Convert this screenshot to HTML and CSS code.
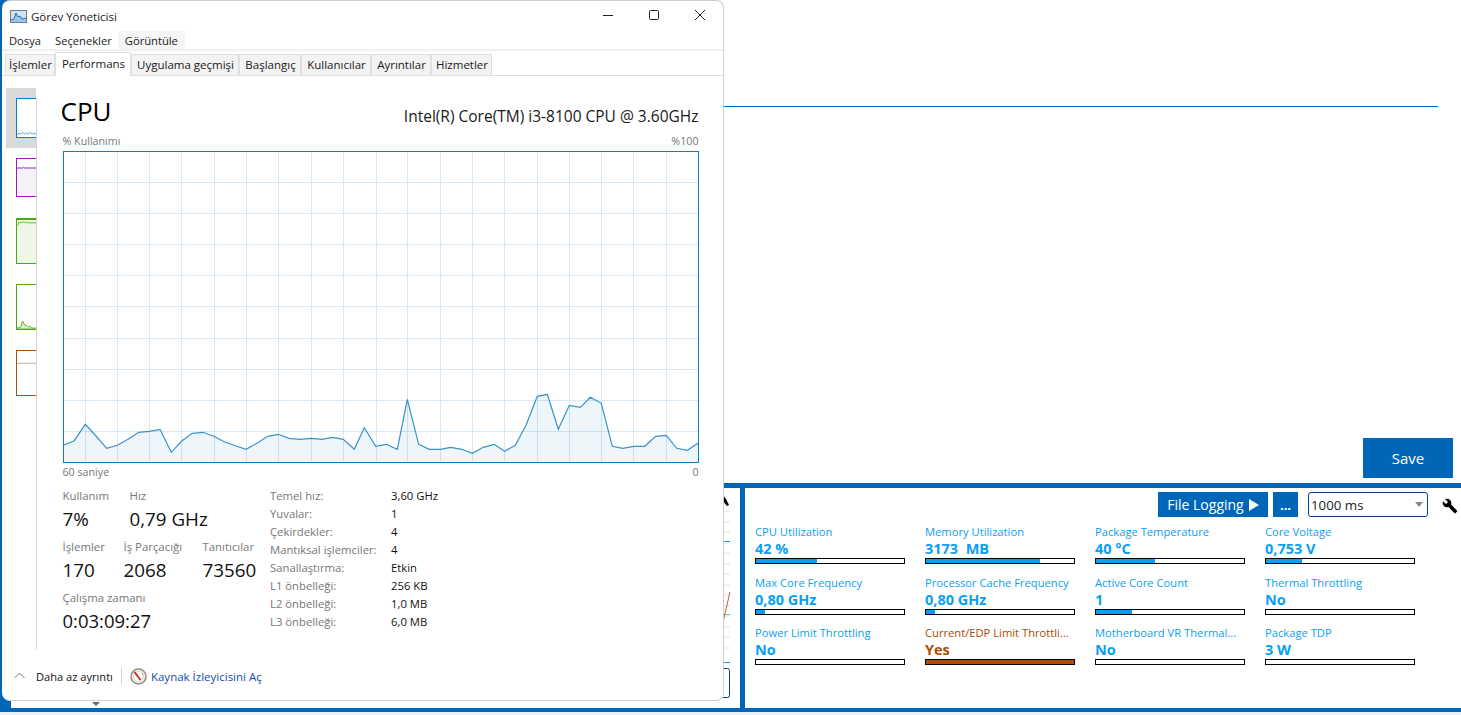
FILE: index.html
```html
<!DOCTYPE html>
<html lang="tr">
<head>
<meta charset="utf-8">
<title>Görev Yöneticisi</title>
<link rel="stylesheet" href="styles.css">
</head>
<body>
<div class="app">
  <div class="main">
    <div class="top">
      <div class="rule"></div>
      <button class="save">Save</button>
    </div>
    <div class="hbar"></div>
    <div class="bottom">
      <div class="left-panel">
        <svg class="sliver" width="17" height="220" viewBox="723 488 17 220">
          <g stroke="#e2e2e2" fill="none">
            <path d="M723 511h7M723 522h7M723 532h7M723 543h7M723 553h7M723 564h7M723 574h7M723 585h7M723 595h7M723 606h7M723 616h7M723 627h7M723 637h7M723 648h7"/>
          </g>
          <path d="M723 541.5h7M723 662.5h7" stroke="#1a9bf0" fill="none"/>
          <path d="M723 614.5h7" stroke="#3fd6b0" fill="none"/>
          <path d="M723 622l7-30" stroke="#c2622a" fill="none"/>
          <path d="M723 668.5h4.500a2 2 0 0 1 2 2v25a2 2 0 0 1-2 2h-4.500" stroke="#0c3f7a" fill="none"/>
          <path d="M723 495l3 4 3 6-2 1-4-5z" fill="#000"/>
        </svg>
        <span class="caret"></span>
      </div>
      <div class="divider"></div>
      <div class="right-panel">
        <div class="toolbar">
          <button class="tbtn log">File Logging <span class="play"></span></button>
          <button class="tbtn more">...</button>
          <div class="select">1000 ms<span class="sel-arrow"></span></div>
          <svg class="wrench" width="16" height="16" viewBox="0 0 24 24"><path d="M22.700 19l-9.100-9.100c.9-2.300.4-5-1.500-6.900-2-2-5-2.400-7.400-1.300L9 6 6 9 1.600 4.700C.4 7.100.9 10.100 2.900 12.100c1.900 1.900 4.600 2.400 6.900 1.500l9.100 9.100c.4.4 1 .4 1.400 0l2.300-2.300c.5-.4.500-1.100.1-1.400z"/></svg>
        </div>
        <div class="metrics">
          <div class="metric"><div class="m-label">CPU Utilization</div><div class="m-value">42 %</div><div class="m-bar"><div class="m-fill" style="width:41%"></div></div></div>
          <div class="metric"><div class="m-label">Memory Utilization</div><div class="m-value">3173&nbsp; MB</div><div class="m-bar"><div class="m-fill" style="width:77%"></div></div></div>
          <div class="metric"><div class="m-label">Package Temperature</div><div class="m-value">40 °C</div><div class="m-bar"><div class="m-fill" style="width:40%"></div></div></div>
          <div class="metric"><div class="m-label">Core Voltage</div><div class="m-value">0,753 V</div><div class="m-bar"><div class="m-fill" style="width:24%"></div></div></div>
          <div class="metric"><div class="m-label">Max Core Frequency</div><div class="m-value">0,80 GHz</div><div class="m-bar"><div class="m-fill" style="width:6%"></div></div></div>
          <div class="metric"><div class="m-label">Processor Cache Frequency</div><div class="m-value">0,80 GHz</div><div class="m-bar"><div class="m-fill" style="width:6%"></div></div></div>
          <div class="metric"><div class="m-label">Active Core Count</div><div class="m-value">1</div><div class="m-bar"><div class="m-fill" style="width:24%"></div></div></div>
          <div class="metric"><div class="m-label">Thermal Throttling</div><div class="m-value">No</div><div class="m-bar"></div></div>
          <div class="metric"><div class="m-label">Power Limit Throttling</div><div class="m-value">No</div><div class="m-bar"></div></div>
          <div class="metric alert"><div class="m-label">Current/EDP Limit Throttli...</div><div class="m-value">Yes</div><div class="m-bar"><div class="m-fill" style="width:100%"></div></div></div>
          <div class="metric"><div class="m-label">Motherboard VR Thermal...</div><div class="m-value">No</div><div class="m-bar"></div></div>
          <div class="metric"><div class="m-label">Package TDP</div><div class="m-value">3 W</div><div class="m-bar"></div></div>
        </div>
      </div>
    </div>
  </div>
  <div class="hbar thin"></div>
  <div class="foot"></div>

  <section class="taskmgr">
    <header class="titlebar">
      <svg class="tm-icon" width="17" height="13" viewBox="0 0 17 13">
        <rect x=".5" y=".5" width="16" height="12" fill="#cfe3f5" stroke="#6d7f95"/>
        <path d="M1 10l3-1 2-6 2 4 2-1 2 3 4-1v4H1z" fill="#9cc6ea"/>
        <path d="M1 10l3-1 2-6 2 4 2-1 2 3 4-1" fill="none" stroke="#2c6fb5"/>
      </svg>
      <span class="title">Görev Yöneticisi</span>
      <div class="winctl">
        <svg width="12" height="12" viewBox="0 0 12 12"><path d="M1 6.500h10" stroke="#222" fill="none"/></svg>
        <svg width="12" height="12" viewBox="0 0 12 12"><rect x="1.500" y="1.500" width="9" height="9" rx="1" stroke="#222" fill="none"/></svg>
        <svg width="12" height="12" viewBox="0 0 12 12"><path d="M1 1l10 10M11 1L1 11" stroke="#222" fill="none"/></svg>
      </div>
    </header>
    <nav class="menu">
      <span class="mi">Dosya</span>
      <span class="mi">Seçenekler</span>
      <span class="mi on">Görüntüle</span>
    </nav>
    <div class="tabs">
      <span class="tab t1">İşlemler</span>
      <span class="tab active">Performans</span>
      <span class="tab t3">Uygulama geçmişi</span>
      <span class="tab t4">Başlangıç</span>
      <span class="tab t5">Kullanıcılar</span>
      <span class="tab t6">Ayrıntılar</span>
      <span class="tab t7">Hizmetler</span>
    </div>
    <div class="body">
      <aside class="side">
        <div class="item sel"><div class="thumb blue">
          <svg viewBox="0 0 20 40" preserveAspectRatio="none"><path d="M0 38l2-2 2 1 2-2 2 2 2-1 2 1 2-2 2 2 2-1 2 1" fill="none" stroke="#4fa0d2"/></svg>
        </div></div>
        <div class="item i2"><div class="thumb purple">
          <svg viewBox="0 0 20 39" preserveAspectRatio="none"><rect y="9" width="20" height="30" fill="#f4f2f6"/><path d="M0 9.500h6l1-1 1 1h12" fill="none" stroke="#9a1fb0"/></svg>
        </div></div>
        <div class="item i3"><div class="thumb green fill-top">
          <svg viewBox="0 0 20 45" preserveAspectRatio="none"><rect width="20" height="45" fill="#eef6e8"/><path d="M1 6l1-4 2 1 3-1 2 1 1-1 1 1h9" fill="none" stroke="#6ab52c"/></svg>
        </div></div>
        <div class="item i4"><div class="thumb green">
          <svg viewBox="0 0 20 45" preserveAspectRatio="none"><path d="M0 44l4-1 2-6 2 4 2 0 2 2 2-1 2 2h4v1H0z" fill="#dcefcb" stroke="#6ab52c"/></svg>
        </div></div>
        <div class="item i5"><div class="thumb orange">
          <svg viewBox="0 0 20 45" preserveAspectRatio="none"><path d="M0 12.500h20" fill="none" stroke="#c9a98f"/></svg>
        </div></div>
      </aside>
      <div class="content">
        <div class="head">
          <h1 class="cpu">CPU</h1>
          <div class="model">Intel(R) Core(TM) i3-8100 CPU @ 3.60GHz</div>
        </div>
        <div class="axis top-axis"><span>% Kullanımı</span><span>%100</span></div>
        <svg class="chart" width="636" height="312" viewBox="63 151 636 312">
          <path class="grid" d="M85.500 151V462M117.500 151V462M149.500 151V462M181.500 151V462M214.500 151V462M246.500 151V462M278.500 151V462M311.500 151V462M343.500 151V462M376.500 151V462M407.500 151V462M440.500 151V462M472.500 151V462M504.500 151V462M537.500 151V462M569.500 151V462M601.500 151V462M633.500 151V462M666.500 151V462M64 182.500H698M64 213.500H698M64 244.500H698M64 275.500H698M64 306.500H698M64 338.500H698M64 369.500H698M64 400.500H698M64 431.500H698"/>
          <polygon class="area" points="63.300,445.300 74.300,440.700 85.300,424.300 96,436 106.700,448.300 117.300,445.300 128,439.300 138.700,432.300 149.300,431.300 160,429.300 171.300,452.300 181.700,441 192.300,433.300 203,432.300 213.700,436.300 224.300,441.700 235.300,445.700 246,449.300 257,443.300 267.700,436.300 278.300,434.300 289,438.300 299.700,439.300 311.300,438.300 322,439.300 332.700,437.300 343.300,439.300 354.300,449.300 364.300,427.700 375.700,446.300 386.300,444.300 397.300,449.300 407.300,399.300 418.700,444.300 429.300,449.300 440.300,449.300 450.700,447.300 461.700,449.300 472.300,453.300 483.300,447.300 494,444.300 504.700,451.300 515.300,445.300 526,425.300 537.300,396.300 547.300,394.300 558.300,429.300 569.300,405.300 580.300,407.300 590.300,397.300 601.300,403.300 612.300,446.300 622.700,448.300 633.700,446.300 644.700,446.300 655.700,436.300 666.300,435.300 676.700,448.300 687.300,450.300 698.300,443 698.300,462 63.300,462"/>
          <polyline class="line" points="63.300,445.300 74.300,440.700 85.300,424.300 96,436 106.700,448.300 117.300,445.300 128,439.300 138.700,432.300 149.300,431.300 160,429.300 171.300,452.300 181.700,441 192.300,433.300 203,432.300 213.700,436.300 224.300,441.700 235.300,445.700 246,449.300 257,443.300 267.700,436.300 278.300,434.300 289,438.300 299.700,439.300 311.300,438.300 322,439.300 332.700,437.300 343.300,439.300 354.300,449.300 364.300,427.700 375.700,446.300 386.300,444.300 397.300,449.300 407.300,399.300 418.700,444.300 429.300,449.300 440.300,449.300 450.700,447.300 461.700,449.300 472.300,453.300 483.300,447.300 494,444.300 504.700,451.300 515.300,445.300 526,425.300 537.300,396.300 547.300,394.300 558.300,429.300 569.300,405.300 580.300,407.300 590.300,397.300 601.300,403.300 612.300,446.300 622.700,448.300 633.700,446.300 644.700,446.300 655.700,436.300 666.300,435.300 676.700,448.300 687.300,450.300 698.300,443"/>
          <rect class="frame" x="63.500" y="151.500" width="635" height="311"/>
        </svg>
        <div class="axis bottom-axis"><span>60 saniye</span><span>0</span></div>
        <div class="stats">
          <div class="live">
            <div class="row r1">
              <div class="stat s-a"><div class="s-label">Kullanım</div><div class="s-val">7%</div></div>
              <div class="stat s-b"><div class="s-label">Hız</div><div class="s-val">0,79 GHz</div></div>
            </div>
            <div class="row r2">
              <div class="stat s-c"><div class="s-label">İşlemler</div><div class="s-val">170</div></div>
              <div class="stat s-d"><div class="s-label">İş Parçacığı</div><div class="s-val">2068</div></div>
              <div class="stat"><div class="s-label">Tanıtıcılar</div><div class="s-val">73560</div></div>
            </div>
            <div class="row r3">
              <div class="stat"><div class="s-label">Çalışma zamanı</div><div class="s-val">0:03:09:27</div></div>
            </div>
          </div>
          <dl class="spec">
            <dt>Temel hız:</dt><dd>3,60 GHz</dd>
            <dt>Yuvalar:</dt><dd>1</dd>
            <dt>Çekirdekler:</dt><dd>4</dd>
            <dt>Mantıksal işlemciler:</dt><dd>4</dd>
            <dt>Sanallaştırma:</dt><dd>Etkin</dd>
            <dt>L1 önbelleği:</dt><dd>256 KB</dd>
            <dt>L2 önbelleği:</dt><dd>1,0 MB</dd>
            <dt>L3 önbelleği:</dt><dd>6,0 MB</dd>
          </dl>
        </div>
      </div>
    </div>
    <footer class="tm-foot">
      <svg class="chev" width="11" height="7" viewBox="0 0 11 7"><path d="M.5 6L5.500 1l5 5" fill="none" stroke="#777"/></svg>
      <span class="less">Daha az ayrıntı</span>
      <span class="vsep"></span>
      <svg class="resmon" width="17" height="17" viewBox="0 0 17 17">
        <circle cx="8.500" cy="8.500" r="7.500" fill="#f5f1ea" stroke="#8c8c86" stroke-width="1.500"/>
        <circle cx="8.500" cy="8.500" r="5" fill="#fff" stroke="#d9d4c8"/>
        <path d="M4.500 4l6 8" stroke="#c8281e" stroke-width="1.800" fill="none"/>
        <path d="M12 5l1 2" stroke="#e08a2a" fill="none"/>
      </svg>
      <a class="link" href="#">Kaynak İzleyicisini Aç</a>
    </footer>
  </section>
</div>
</body>
</html>
```
FILE: styles.css
```css
* { box-sizing: border-box; }
html, body { margin: 0; padding: 0; }
body { font-family: "Open Sans", "Noto Sans", "Liberation Sans", sans-serif; background: #fff; color: #000; }
button { font-family: inherit; border: 0; padding: 0; }

.app { position: relative; width: 1461px; height: 715px; overflow: hidden; display: flex; flex-direction: column; background: #fff; }
.main { height: 708px; display: flex; flex-direction: column; border-left: 11px solid #0067b8; }
.top { height: 483px; display: flex; flex-direction: column; padding: 106px 8px 5px 0; }
.rule { height: 1px; background: #0067b8; margin-right: 15px; }
.save { margin-top: auto; align-self: flex-end; width: 90px; height: 40px; background: #0067b8; color: #fff; font-size: 15px; }
.hbar { height: 5px; background: #0067b8; flex: none; }
.hbar.thin { height: 4px; }
.foot { flex: 1; background: #e9f0fa; }

.bottom { height: 220px; display: flex; }
.left-panel { width: 729px; position: relative; display: flex; justify-content: flex-end; }
.sliver { display: block; }
.caret { position: absolute; left: 81px; top: 214px; border: 4px solid transparent; border-top-color: #666; border-bottom: 0; }
.divider { width: 5px; background: #0067b8; }
.right-panel { flex: 1; padding: 4px 3px 0 10px; }
.toolbar { display: flex; justify-content: flex-end; align-items: center; height: 25px; }
.tbtn { height: 25px; background: #0067b8; color: #fff; font-size: 14px; display: flex; align-items: center; justify-content: center; }
.log { width: 110px; gap: 5px; }
.play { width: 0; height: 0; border-left: 10px solid #fff; border-top: 6px solid transparent; border-bottom: 6px solid transparent; }
.more { width: 25px; margin-left: 5px; font-weight: 700; font-size: 13px; }
.select { width: 120px; height: 25px; margin-left: 10px; border: 1px solid #0c3f7a; border-radius: 3px; font-size: 13.300px; line-height: 24px; padding-left: 2px; position: relative; color: #222; }
.sel-arrow { position: absolute; right: 4px; top: 9px; border: 4.500px solid transparent; border-top: 5px solid #888; border-bottom: 0; }
.wrench { margin-left: 14px; margin-top: 3px; }
.metrics { display: grid; grid-template-columns: repeat(4, 150px); column-gap: 20px; margin-top: 7px; }
.metric { height: 50.500px; color: #0a9ff5; }
.m-label { font-size: 11.200px; line-height: 16px; white-space: nowrap; }
.m-value { font-size: 14.500px; font-weight: 700; line-height: 17px; }
.m-bar { height: 6px; border: 1px solid #000; background: #fff; margin-top: 1px; }
.m-fill { height: 100%; background: #0a9ff5; }
.alert { color: #b04a00; }
.alert .m-fill { background: #b04a00; }

.taskmgr { position: absolute; left: 2px; top: 0; width: 722px; height: 701px; background: #fff; border: 1px solid #cfcfcf; border-width: 1px 1px 1px 0; border-radius: 8px; display: flex; flex-direction: column; }
.titlebar { height: 30px; display: flex; align-items: center; padding: 0 17px 0 8px; flex: none; }
.title { margin-left: 4px; font-size: 11.500px; color: #1a1a1a; }
.winctl { margin-left: auto; display: flex; gap: 34px; margin-top: -2px; }
.menu { height: 20px; display: flex; flex: none; border-bottom: 2px solid #f0f0f0; align-items: stretch; }
.mi { font-size: 11.200px; line-height: 19px; padding: 0 7px; color: #1a1a1a; }
.mi.on { background: #f5f5f5; border-radius: 3px 3px 0 0; margin-left: -1px; }
.tabs { height: 25px; display: flex; align-items: flex-end; border-bottom: 1px solid #e0e0e0; padding-left: 3px; flex: none; }
.tab { height: 21px; background: #f3f3f3; border: 1px solid #e0e0e0; border-bottom: 0; padding-left: 1px; font-size: 11.500px; line-height: 19px; color: #1a1a1a; text-align: center; white-space: nowrap; }
.t1 { width: 50px; }
.active { width: 76px; height: 24px; background: #fff; margin-bottom: -1px; line-height: 21px; }
.t3 { width: 108px; }
.t4 { width: 62px; }
.t5 { width: 70px; }
.t6 { width: 60px; }
.t7 { width: 61px; }

.body { height: 573px; display: flex; flex: none; padding-top: 12px; }
.side { width: 30px; flex: none; margin-left: 4px; }
.item { padding: 10px 0 0 10px; height: 60px; }
.sel { background: #d9d9d9; }
.i2 { height: 60px; }
.i3 { height: 66px; }
.i4 { height: 66px; }
.i5 { height: 66px; }
.thumb { border: 1.500px solid; border-right: 0; width: 20px; height: 40px; }
.thumb svg { display: block; width: 100%; height: 100%; }
.blue { border-color: #117dbb; background: #fff; }
.purple { border-color: #9a1fb0; height: 39px; }
.green { border-color: #4fa60f; height: 46px; }
.fill-top { border-top-width: 2px; }
.orange { border-color: #a8500e; height: 46px; }

.content { flex: 1; border-left: 1.500px solid #d4d4d4; margin-top: 10px; padding: 0 0 0 25.500px; height: 551px; }
.head { display: flex; justify-content: space-between; align-items: center; width: 636px; height: 34px; margin-top: -4px; }
.cpu { margin: 0 0 0 -2px; font-weight: 400; font-size: 26px; line-height: 34px; }
.model { font-size: 15.500px; margin-top: 10px; color: #1a1a1a; }
.axis { display: flex; justify-content: space-between; width: 636px; font-size: 10.700px; color: #777; line-height: 14px; }
.top-axis { height: 14px; margin-top: 6px; }
.chart { display: block; margin-top: 3px; }
.grid { stroke: #d9e8f3; fill: none; }
.area { fill: #117dbb; fill-opacity: .07; stroke: none; }
.line { stroke: #3a93c8; stroke-width: 1.200; fill: none; }
.frame { stroke: #117dbb; fill: none; }
.bottom-axis { margin-top: 2px; }
.stats { display: flex; margin-top: 9px; }
.live { width: 207.500px; flex: none; }
.row { display: flex; height: 51px; }
.stat { flex: none; }
.s-a { width: 67px; }
.s-c { width: 61px; }
.s-d { width: 79px; }
.s-label { font-size: 11.400px; color: #777; line-height: 16px; }
.s-val { font-size: 18.800px; line-height: 26px; margin-top: 2px; white-space: nowrap; color: #111; }
.r3 .s-val { font-size: 18.500px; }
.spec { margin: -1px 0 0; display: grid; grid-template-columns: 121px auto; grid-auto-rows: 18px; font-size: 11.300px; line-height: 18px; }
.spec dt { color: #777; }
.spec dd { margin: 0; color: #111; }

.tm-foot { flex: 1; display: flex; align-items: center; padding: 3px 0 0 12px; font-size: 11.100px; }
.chev { margin-top: -2px; }
.less { margin-left: 11px; color: #111; }
.vsep { width: 1px; height: 16px; background: #d4d4d4; margin: 0 8px; }
.resmon { flex: none; }
.link { margin-left: 4px; font-size: 11.500px; color: #0f4fa8; text-decoration: none; }
```
